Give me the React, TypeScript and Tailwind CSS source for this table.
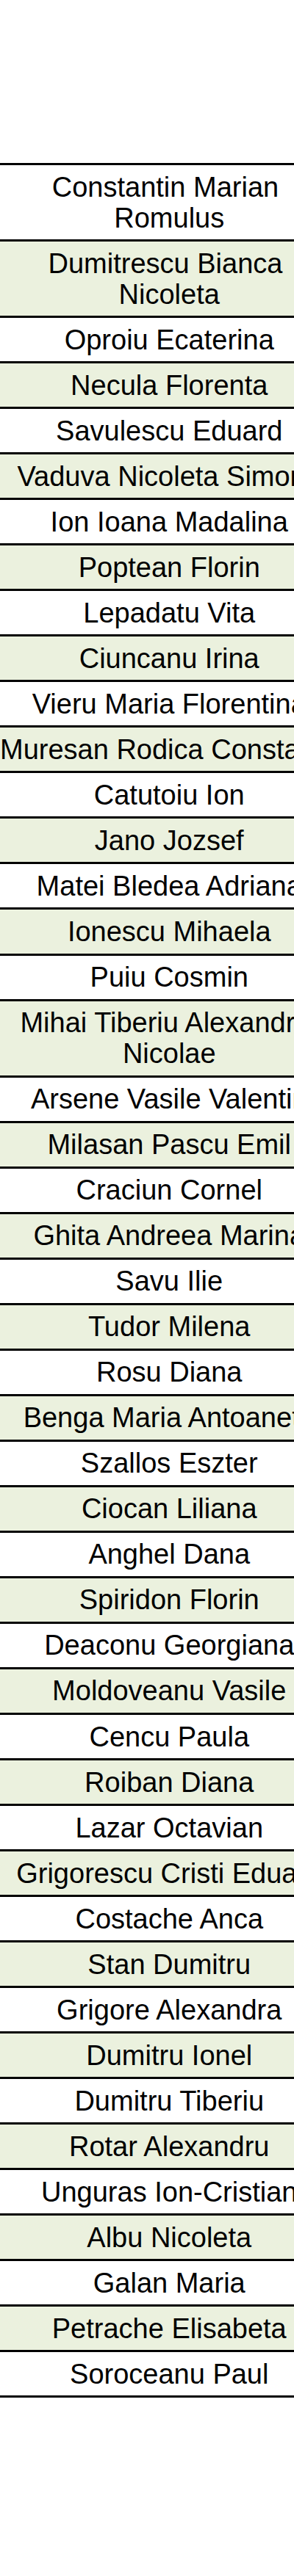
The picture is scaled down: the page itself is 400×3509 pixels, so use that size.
import React from 'react';

const names: string[][] = [
  ['Constantin Marian\u00a0', 'Romulus'],
  ['Dumitrescu Bianca\u00a0', 'Nicoleta'],
  ['Oproiu Ecaterina'],
  ['Necula Florenta'],
  ['Savulescu Eduard'],
  ['Vaduva Nicoleta Simona'],
  ['Ion Ioana Madalina'],
  ['Poptean Florin'],
  ['Lepadatu Vita'],
  ['Ciuncanu Irina'],
  ['Vieru Maria Florentina'],
  ['Muresan Rodica Constanta'],
  ['Catutoiu Ion'],
  ['Jano Jozsef'],
  ['Matei Bledea Adriana'],
  ['Ionescu Mihaela'],
  ['Puiu Cosmin'],
  ['Mihai Tiberiu Alexandru\u00a0', 'Nicolae'],
  ['Arsene Vasile Valentin'],
  ['Milasan Pascu Emil'],
  ['Craciun Cornel'],
  ['Ghita Andreea Marina'],
  ['Savu Ilie'],
  ['Tudor Milena'],
  ['Rosu Diana'],
  ['Benga Maria Antoaneta'],
  ['Szallos Eszter'],
  ['Ciocan Liliana'],
  ['Anghel Dana'],
  ['Spiridon Florin'],
  ['Deaconu Georgiana'],
  ['Moldoveanu Vasile'],
  ['Cencu Paula'],
  ['Roiban Diana'],
  ['Lazar Octavian'],
  ['Grigorescu Cristi Eduard'],
  ['Costache Anca'],
  ['Stan Dumitru'],
  ['Grigore Alexandra'],
  ['Dumitru Ionel'],
  ['Dumitru Tiberiu'],
  ['Rotar Alexandru'],
  ['Unguras Ion-Cristian'],
  ['Albu Nicoleta'],
  ['Galan Maria'],
  ['Petrache Elisabeta'],
  ['Soroceanu Paul'],
];

export default function App() {
  return (
    <div className="w-[400px] min-h-[3509px] bg-white overflow-hidden pt-[222px] font-['Liberation_Sans',Arial,sans-serif] text-black">
      <table className="w-[458px] border-collapse border-t-[3px] border-black">
        <tbody>
          {names.map((lines, i) => (
            <tr key={i} className={i % 2 === 1 ? 'bg-[#ebf1de]' : 'bg-white'}>
              <td className="border-b-[3px] border-black px-0 py-[8.52px] text-center text-[38px] leading-[42px] whitespace-nowrap">
                {lines.map((l, j) => (
                  <React.Fragment key={j}>
                    {j > 0 && <br />}
                    {l}
                  </React.Fragment>
                ))}
              </td>
            </tr>
          ))}
        </tbody>
      </table>
    </div>
  );
}
